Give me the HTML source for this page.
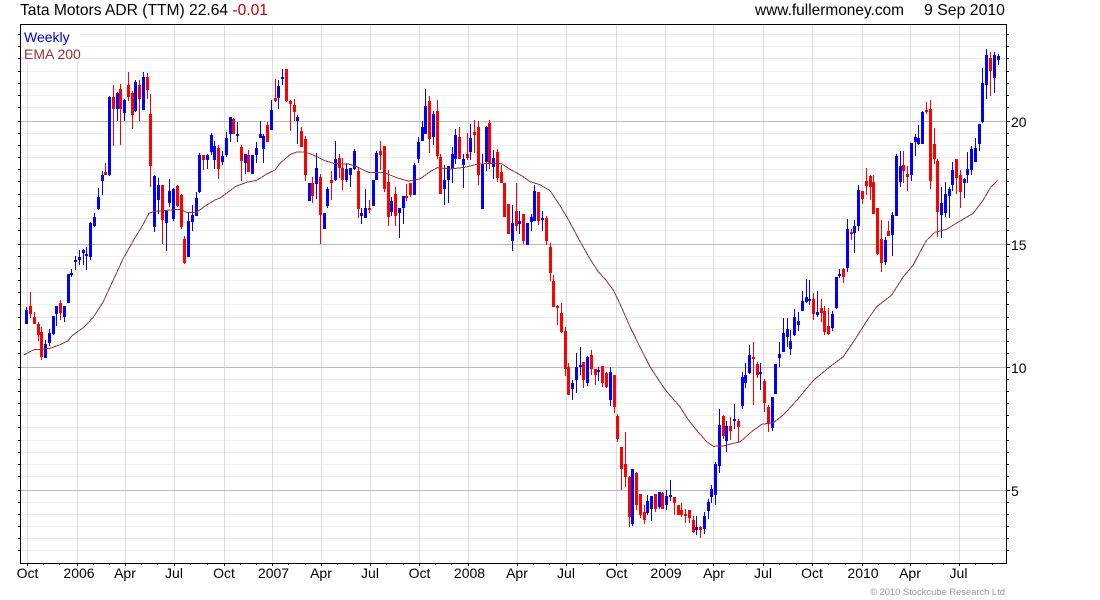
<!DOCTYPE html>
<html>
<head>
<meta charset="utf-8">
<title>Tata Motors ADR (TTM)</title>
<style>
html,body{margin:0;padding:0;background:#fff;width:1100px;height:600px;overflow:hidden}
svg{display:block}
text{font-family:"Liberation Sans",Arial,sans-serif}
.t{font-size:16px;fill:#000}
.a{font-size:14px;fill:#000;text-anchor:middle}
.r{font-size:14px;fill:#000}
</style>
</head>
<body>
<svg width="1100" height="600" viewBox="0 0 1100 600" xmlns="http://www.w3.org/2000/svg">
<g shape-rendering="crispEdges" fill="none">
<path stroke="#eeeeee" d="M21 34.5H1006M21 46.5H1006M21 58.5H1006M21 71.5H1006M21 83.5H1006M21 95.5H1006M21 107.5H1006M21 133.5H1006M21 145.5H1006M21 157.5H1006M21 169.5H1006M21 181.5H1006M21 194.5H1006M21 206.5H1006M21 218.5H1006M21 230.5H1006M21 256.5H1006M21 268.5H1006M21 280.5H1006M21 292.5H1006M21 304.5H1006M21 317.5H1006M21 329.5H1006M21 341.5H1006M21 353.5H1006M21 379.5H1006M21 391.5H1006M21 403.5H1006M21 415.5H1006M21 427.5H1006M21 440.5H1006M21 452.5H1006M21 464.5H1006M21 476.5H1006M21 502.5H1006M21 514.5H1006M21 526.5H1006M21 538.5H1006M21 550.5H1006"/>
<path stroke="#dddddd" d="M27.5 25V563M77.5 25V563M125.5 25V563M174.5 25V563M224.5 25V563M272.5 25V563M321.5 25V563M370.5 25V563M419.5 25V563M468.5 25V563M517.5 25V563M566.5 25V563M616.5 25V563M665.5 25V563M713.5 25V563M763.5 25V563M812.5 25V563M862.5 25V563M910.5 25V563M959.5 25V563"/>
<path stroke="#bbbbbb" d="M21 121.5H1006M21 244.5H1006M21 367.5H1006M21 490.5H1006"/>
<rect x="21" y="25" width="59" height="37" fill="#fff"/>
<path stroke="#0000ff" stroke-width="1" d="M26.5 307V324M45.5 340V358M49.5 329V346M53.5 316V335M56.5 306V326M64.5 306V322M68.5 274V303M71.5 269V277M75.5 256V270M79.5 250V265M83.5 249V265M86.5 247V270M90.5 222V260M94.5 213V227M98.5 188V210M102.5 171V195M109.5 96V176M117.5 92V121M124.5 99V121M135.5 80V112M143.5 72V110M154.5 175V232M158.5 178V214M166.5 210V251M169.5 179V207M173.5 188V221M188.5 213V257M192.5 205V231M196.5 192V216M199.5 153V193M207.5 154V169M211.5 133V155M214.5 141V169M222.5 151V165M226.5 132V157M230.5 117V142M237.5 122V142M245.5 154V174M252.5 155V174M256.5 142V163M260.5 121V138M263.5 134V163M271.5 100V130M278.5 80V109M282.5 69V85M297.5 115V144M309.5 183V201M316.5 153V199M324.5 213V229M327.5 187V208M335.5 141V181M346.5 163V182M350.5 168V187M354.5 149V170M361.5 208V224M365.5 189V218M373.5 180V206M376.5 151V180M391.5 197V216M399.5 208V238M403.5 196V224M414.5 163V195M418.5 137V163M422.5 121V141M425.5 89V134M433.5 111V145M444.5 165V205M448.5 166V203M452.5 147V183M455.5 129V164M463.5 154V188M470.5 124V160M482.5 154V209M486.5 126V171M493.5 150V179M512.5 205V251M519.5 211V234M527.5 223V245M531.5 214V231M534.5 185V221M542.5 211V231M572.5 380V400M576.5 353V393M580.5 347V375M587.5 356V386M598.5 367V381M610.5 367V406M632.5 469V526M647.5 495V515M651.5 496V521M659.5 492V509M666.5 490V510M670.5 480V501M696.5 516V535M704.5 512V534M708.5 499V519M711.5 485V503M715.5 462V505M719.5 409V473M726.5 421V452M734.5 404V429M742.5 372V409M745.5 363V388M749.5 345V374M760.5 363V390M772.5 397V431M775.5 364V394M779.5 342V367M783.5 318V352M787.5 318V347M790.5 330V355M794.5 309V336M798.5 312V331M802.5 291V311M806.5 279V303M809.5 280V305M817.5 291V317M832.5 311V331M836.5 277V309M839.5 269V278M847.5 219V272M854.5 220V253M858.5 185V231M885.5 237V265M892.5 212V256M896.5 154V216M900.5 151V187M911.5 143V181M915.5 134V156M918.5 125V145M922.5 111V144M941.5 187V238M945.5 182V217M949.5 187V218M952.5 162V191M964.5 178V198M967.5 152V183M971.5 146V175M975.5 138V162M979.5 124V151M982.5 68V123M986.5 49V99M994.5 52V93M998.5 54V65"/>
<path stroke="#0000ff" stroke-width="3" d="M26.5 310V324M45.5 344V358M49.5 333V343M53.5 316V334M56.5 306V314M64.5 306V317M68.5 274V303M71.5 273V275M75.5 260V262M79.5 257V260M83.5 250V253M86.5 254V256M90.5 223V257M94.5 217V226M98.5 197V209M102.5 175V181M109.5 97V175M117.5 93V109M124.5 100V113M135.5 82V111M143.5 77V110M154.5 176V227M158.5 185V200M166.5 211V223M169.5 191V203M173.5 189V219M188.5 221V257M192.5 215V222M196.5 198V216M199.5 155V192M207.5 155V160M211.5 135V152M214.5 146V160M222.5 156V162M226.5 138V155M230.5 117V134M237.5 134V136M245.5 154V163M252.5 155V174M256.5 148V155M260.5 134V138M263.5 136V149M271.5 110V130M278.5 86V98M282.5 77V79M297.5 117V121M309.5 183V201M316.5 168V184M324.5 213V229M327.5 189V206M335.5 159V180M346.5 169V180M350.5 168V175M354.5 151V169M361.5 213V216M365.5 208V218M373.5 180V206M376.5 153V180M391.5 201V212M399.5 208V213M403.5 196V208M414.5 165V195M418.5 142V159M422.5 127V141M425.5 106V134M433.5 114V137M444.5 180V189M448.5 166V180M452.5 154V169M455.5 135V159M463.5 159V165M470.5 138V152M482.5 164V209M486.5 127V162M493.5 158V167M512.5 223V241M519.5 221V224M527.5 223V245M531.5 217V222M534.5 191V221M542.5 218V220M572.5 383V389M576.5 367V380M580.5 365V367M587.5 357V383M598.5 370V372M610.5 372V400M632.5 469V524M647.5 501V513M651.5 496V509M659.5 492V507M666.5 496V505M670.5 495V497M696.5 527V530M704.5 516V529M708.5 502V511M711.5 489V497M715.5 464V495M719.5 425V466M726.5 426V441M734.5 419V421M742.5 377V406M745.5 375V383M749.5 355V373M760.5 372V374M772.5 397V428M775.5 364V394M779.5 354V358M783.5 333V352M787.5 329V337M790.5 341V349M794.5 317V335M798.5 321V325M802.5 301V311M806.5 297V302M809.5 299V301M817.5 312V315M832.5 314V328M836.5 277V308M839.5 274V276M847.5 229V268M854.5 226V233M858.5 190V226M885.5 240V262M892.5 215V235M896.5 156V216M900.5 166V182M911.5 143V175M915.5 137V142M918.5 138V144M922.5 112V144M941.5 203V215M945.5 194V213M949.5 189V196M952.5 170V185M964.5 179V183M967.5 169V175M971.5 149V170M975.5 148V162M979.5 124V144M982.5 83V122M986.5 55V85M994.5 55V78M998.5 56V60"/>
<path stroke="#ff0000" stroke-width="1" d="M30.5 292V318M34.5 312V324M38.5 322V341M41.5 327V360M60.5 300V320M105.5 163V175M113.5 85V146M120.5 84V145M128.5 72V101M132.5 91V129M139.5 80V121M147.5 73V99M150.5 94V187M162.5 185V244M177.5 185V207M181.5 194V229M184.5 236V264M203.5 155V170M218.5 145V179M233.5 118V134M241.5 145V181M248.5 150V172M267.5 122V142M275.5 79V102M286.5 69V102M290.5 100V131M294.5 99V121M301.5 127V147M305.5 136V181M312.5 177V203M320.5 174V244M331.5 171V200M339.5 154V178M342.5 158V190M358.5 168V218M369.5 200V213M380.5 141V170M384.5 146V192M388.5 170V226M395.5 187V226M406.5 184V201M410.5 183V197M429.5 96V153M437.5 100V159M440.5 154V194M459.5 127V159M467.5 133V160M474.5 120V153M478.5 121V185M489.5 120V169M497.5 149V182M501.5 165V183M504.5 183V217M508.5 204V234M516.5 183V231M523.5 214V244M538.5 192V225M546.5 216V245M550.5 243V281M553.5 275V307M557.5 305V325M561.5 303V333M565.5 327V376M568.5 363V395M583.5 362V388M591.5 350V375M595.5 369V385M602.5 366V387M606.5 372V388M614.5 375V413M617.5 414V442M621.5 447V490M625.5 432V487M629.5 476V527M636.5 472V510M640.5 494V518M644.5 505V524M655.5 494V512M662.5 492V509M674.5 497V515M678.5 505V515M681.5 503V517M685.5 509V523M689.5 510V523M693.5 516V533M700.5 526V538M723.5 415V439M730.5 417V440M738.5 419V442M753.5 342V405M757.5 362V378M764.5 379V412M768.5 405V432M813.5 293V320M821.5 299V322M824.5 306V335M828.5 308V335M843.5 268V283M851.5 229V240M862.5 191V204M866.5 168V195M870.5 175V200M873.5 175V214M877.5 208V255M881.5 220V272M888.5 221V236M903.5 151V183M907.5 166V191M926.5 102V114M930.5 100V189M934.5 128V164M937.5 159V237M956.5 159V194M960.5 170V208M990.5 52V96"/>
<path stroke="#ff0000" stroke-width="3" d="M30.5 306V314M34.5 317V324M38.5 324V335M41.5 332V357M60.5 303V313M105.5 172V175M113.5 97V109M120.5 89V109M128.5 85V97M132.5 93V115M139.5 85V99M147.5 77V90M150.5 114V166M162.5 185V220M177.5 186V206M181.5 195V227M184.5 239V263M203.5 155V160M218.5 148V169M233.5 119V134M241.5 147V161M248.5 155V172M267.5 125V142M275.5 98V101M286.5 69V101M290.5 101V104M294.5 105V112M301.5 131V147M305.5 139V175M312.5 183V196M320.5 177V215M331.5 180V183M339.5 158V168M342.5 168V180M358.5 171V209M369.5 208V210M380.5 151V155M384.5 146V189M388.5 182V217M395.5 194V216M406.5 196V198M410.5 183V195M429.5 101V139M437.5 111V156M440.5 157V194M459.5 137V159M467.5 154V158M474.5 132V135M478.5 127V175M489.5 123V163M497.5 152V178M501.5 172V183M504.5 183V217M508.5 204V234M516.5 211V226M523.5 214V241M538.5 192V221M546.5 218V241M550.5 247V273M553.5 281V307M557.5 306V308M561.5 313V332M565.5 331V369M568.5 367V395M583.5 362V380M591.5 355V369M595.5 369V375M602.5 366V383M606.5 373V387M614.5 375V407M617.5 416V439M621.5 447V469M625.5 464V477M629.5 477V517M636.5 473V505M640.5 494V515M644.5 512V520M655.5 494V509M662.5 493V509M674.5 497V503M678.5 505V515M681.5 510V515M685.5 514V516M689.5 510V518M693.5 520V532M700.5 527V530M723.5 416V436M730.5 426V431M738.5 421V427M753.5 357V359M757.5 364V375M764.5 381V403M768.5 407V424M813.5 299V314M821.5 308V313M824.5 311V332M828.5 326V334M843.5 269V277M851.5 232V234M862.5 191V199M866.5 181V186M870.5 176V187M873.5 182V214M877.5 208V254M881.5 239V263M888.5 231V236M903.5 165V171M907.5 174V177M926.5 110V112M930.5 109V181M934.5 144V159M937.5 161V212M956.5 159V178M960.5 175V192M990.5 58V71"/>
<path stroke="#993333" stroke-width="1" stroke-linejoin="round" d="M23.3 355.3L30 351.7L34.3 349.7L41.7 349.3L50 348.3L60 344.7L68.3 340.7L71.7 336L78.3 331L83.3 327.7L93.3 317.3L103.3 301.7L113.3 280L123.3 258.3L133.3 240.7L143.3 224L149 213.3L155 211.3L166.7 210.3L180 209.3L186.7 212.3L196.7 212.3L205 206L215 200L220 198L230 190.7L235 186.7L246.7 182.3L256.7 180.3L266.7 174L275 170L280 163.3L290 154.7L296.7 152L305 152L313.3 155L325 160.7L333.3 163.3L350 164.3L356.7 166.7L368.3 172.3L383.3 172.3L396.7 177.7L408.3 181L420 179L430 171.7L437.3 167.7L450 169L465 167.3L476.7 164.3L490 163.3L501.7 163.7L510 169.3L521.7 175.7L530 181.7L540 184.7L550 190.7L560 205.7L566.7 216.7L579.3 240L590 259L598.3 271.7L605 279L613.3 290L620 304L630 326.7L640 347L650 366.7L658 379L666.7 391.7L680 406.7L687 418L695 428.3L706.7 441.7L713.3 446.3L723.3 446L733.3 443.3L740 442L751.7 431.7L761.7 424.3L773.3 422.7L783.3 415L797 400L813.3 380.5L830 366.7L843.3 356.7L852 344L860 331.7L868 319L876.7 306.7L891.7 295L903.3 276.7L913.3 265L920 252L926.7 240L935 232.3L946.7 229.3L960 221L973.3 213.3L983.3 200L990 188.3L997.7 180"/>
<path stroke="#000" d="M18 34.5H20M18 46.5H20M18 58.5H20M18 71.5H20M18 83.5H20M18 95.5H20M18 107.5H20M18 121.5H20M18 133.5H20M18 145.5H20M18 157.5H20M18 169.5H20M18 181.5H20M18 194.5H20M18 206.5H20M18 218.5H20M18 230.5H20M18 244.5H20M18 256.5H20M18 268.5H20M18 280.5H20M18 292.5H20M18 304.5H20M18 317.5H20M18 329.5H20M18 341.5H20M18 353.5H20M18 367.5H20M18 379.5H20M18 391.5H20M18 403.5H20M18 415.5H20M18 427.5H20M18 440.5H20M18 452.5H20M18 464.5H20M18 476.5H20M18 490.5H20M18 502.5H20M18 514.5H20M18 526.5H20M18 538.5H20M18 550.5H20"/>
<path stroke="#000" d="M1007 34.5H1009M1007 46.5H1009M1007 58.5H1009M1007 71.5H1009M1007 83.5H1009M1007 95.5H1009M1007 107.5H1009M1007 121.5H1010M1007 133.5H1009M1007 145.5H1009M1007 157.5H1009M1007 169.5H1009M1007 181.5H1009M1007 194.5H1009M1007 206.5H1009M1007 218.5H1009M1007 230.5H1009M1007 244.5H1010M1007 256.5H1009M1007 268.5H1009M1007 280.5H1009M1007 292.5H1009M1007 304.5H1009M1007 317.5H1009M1007 329.5H1009M1007 341.5H1009M1007 353.5H1009M1007 367.5H1010M1007 379.5H1009M1007 391.5H1009M1007 403.5H1009M1007 415.5H1009M1007 427.5H1009M1007 440.5H1009M1007 452.5H1009M1007 464.5H1009M1007 476.5H1009M1007 490.5H1010M1007 502.5H1009M1007 514.5H1009M1007 526.5H1009M1007 538.5H1009M1007 550.5H1009"/>
<path stroke="#000" d="M27.5 564V566M77.5 564V566M125.5 564V566M174.5 564V566M224.5 564V566M272.5 564V566M321.5 564V566M370.5 564V566M419.5 564V566M468.5 564V566M517.5 564V566M566.5 564V566M616.5 564V566M665.5 564V566M713.5 564V566M763.5 564V566M812.5 564V566M862.5 564V566M910.5 564V566M959.5 564V566"/>
<path stroke="#000" d="M43.5 564V565M59.5 564V565M93.5 564V565M109.5 564V565M141.5 564V565M157.5 564V565M190.5 564V565M207.5 564V565M240.5 564V565M256.5 564V565M288.5 564V565M305.5 564V565M337.5 564V565M353.5 564V565M386.5 564V565M403.5 564V565M435.5 564V565M451.5 564V565M533.5 564V565M549.5 564V565M582.5 564V565M599.5 564V565M632.5 564V565M649.5 564V565M681.5 564V565M697.5 564V565M729.5 564V565M746.5 564V565M779.5 564V565M796.5 564V565M828.5 564V565M845.5 564V565M878.5 564V565M894.5 564V565M926.5 564V565M943.5 564V565M975.5 564V565M992.5 564V565"/>
<rect x="20.5" y="24.5" width="986" height="539" stroke="#000" stroke-width="1"/>
</g>
<text class="t" x="20" y="15" textLength="248" lengthAdjust="spacingAndGlyphs">Tata Motors ADR (TTM) 22.64 <tspan fill="#c00000">-0.01</tspan></text>
<text class="t" x="755" y="15" textLength="149" lengthAdjust="spacingAndGlyphs">www.fullermoney.com</text>
<text class="t" x="924" y="15" textLength="81" lengthAdjust="spacingAndGlyphs">9 Sep 2010</text>
<text x="24" y="42" style="font-size:14px;fill:#0000cc">Weekly</text>
<text x="24" y="59" style="font-size:14px;fill:#a03030">EMA 200</text>
<text class="r" x="1011" y="127">20</text>
<text class="r" x="1011" y="250">15</text>
<text class="r" x="1011" y="373">10</text>
<text class="r" x="1011" y="496">5</text>
<text class="a" x="27.5" y="578">Oct</text>
<text class="a" x="79" y="578">2006</text>
<text class="a" x="125" y="578">Apr</text>
<text class="a" x="174" y="578">Jul</text>
<text class="a" x="224" y="578">Oct</text>
<text class="a" x="273.5" y="578">2007</text>
<text class="a" x="321" y="578">Apr</text>
<text class="a" x="370" y="578">Jul</text>
<text class="a" x="419.5" y="578">Oct</text>
<text class="a" x="469.5" y="578">2008</text>
<text class="a" x="517" y="578">Apr</text>
<text class="a" x="566" y="578">Jul</text>
<text class="a" x="616.5" y="578">Oct</text>
<text class="a" x="666" y="578">2009</text>
<text class="a" x="714" y="578">Apr</text>
<text class="a" x="763" y="578">Jul</text>
<text class="a" x="812" y="578">Oct</text>
<text class="a" x="863" y="578">2010</text>
<text class="a" x="910" y="578">Apr</text>
<text class="a" x="958.5" y="578">Jul</text>
<text x="870" y="595" textLength="135" lengthAdjust="spacing" style="font-size:9.5px;fill:#999999">© 2010 Stockcube Research Ltd</text>
</svg>
</body>
</html>
